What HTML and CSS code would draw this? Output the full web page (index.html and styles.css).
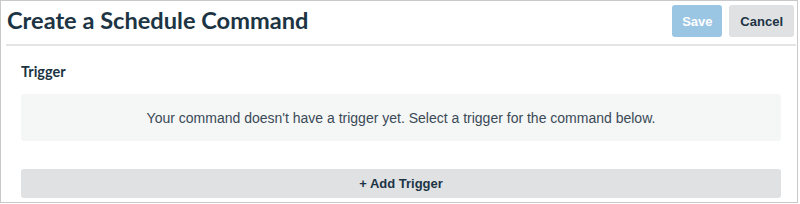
FILE: index.html
```html
<!DOCTYPE html>
<html lang="en">
<head>
    <meta charset="UTF-8">
    <title>Create a Schedule Command</title>
    <link rel="stylesheet" href="styles.css">
</head>
<body>
<div class="frame">
    <div class="page">
        <div class="page-header">
            <h1 class="page-title">Create a Schedule Command</h1>
            <div class="actions">
                <button class="btn btn-primary" disabled>Save</button>
                <button class="btn btn-default">Cancel</button>
            </div>
        </div>

        <div class="section">
            <h2 class="section-title">Trigger</h2>
            <div class="empty-state">
                Your command doesn't have a trigger yet. Select a trigger for the command below.
            </div>
            <button class="btn btn-default btn-block">+ Add Trigger</button>
        </div>
    </div>
</div>
</body>
</html>
```

FILE: styles.css
```css
body {
    margin: 0;
    font-family: "Liberation Sans", Arial, sans-serif;
    background: #fff;
}

.frame {
    box-sizing: border-box;
    width: 798px;
    height: 203px;

    border: 1px solid #c9c9c9;
    overflow: hidden;
}

.page {
    margin: 0 1px 0 5px;
}

.page-header {
    display: flex;
    align-items: flex-start;
    justify-content: space-between;

    height: 43px;
    padding-right: 2px;

    border-bottom: 2px solid #e4e4e4;
}

.page-title {
    margin: 3px 0 0 1px;

    font-family: Lato, sans-serif;
    font-size: 23.6px;
    font-weight: bold;
    line-height: 32px;
    color: #1c3443;
}

.actions {
    display: flex;
    gap: 7px;
    padding-top: 4px;
}

.btn {
    height: 32px;
    padding: 0 11px;

    font-family: "Liberation Sans", Arial, sans-serif;
    font-size: 13px;
    font-weight: bold;

    border: none;
    border-radius: 3px;
    cursor: pointer;
}

.btn-primary {
    width: 50px;
    padding: 0;
    color: #fff;
    background-color: #9ac5e3;
}

.btn-default {
    color: #1c3443;
    background-color: #dfe1e3;
}

.section {
    padding: 0 15px;
}

.section-title {
    margin: 17px 0 0;

    font-family: Lato, sans-serif;
    font-size: 14.5px;
    font-weight: bold;
    line-height: 18px;
    color: #1c3443;
}

.empty-state {
    margin-top: 13px;
    height: 47px;

    display: flex;
    align-items: center;
    justify-content: center;

    font-size: 14px;
    color: #3a4a56;

    border-radius: 3px;
    background-color: #f5f6f6;
}

.btn-block {
    display: block;
    width: 100%;
    height: 29px;
    margin-top: 28px;
}
```
